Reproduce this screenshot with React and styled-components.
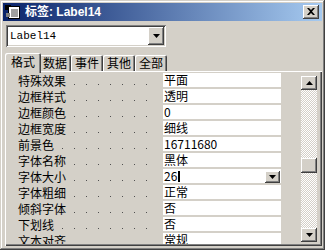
import React from "react";
import styled, { createGlobalStyle, css } from "styled-components";

const GlobalStyle = createGlobalStyle`
  html, body { margin: 0; padding: 0; background: #d4d0c8; }
  body { font-family: "Noto Sans CJK SC", sans-serif; }
  * { box-sizing: border-box; }
`;

const raised = css`
  background: #d4d0c8;
  box-shadow: inset -1px -1px #404040, inset 1px 1px #ffffff,
    inset -2px -2px #808080, inset 2px 2px #d4d0c8;
`;

const Window = styled.div`
  width: 325px;
  height: 250px;
  padding: 3px;
  background: #d4d0c8;
  box-shadow: inset -1px -1px #404040, inset 1px 1px #d4d0c8,
    inset -2px -2px #808080, inset 2px 2px #ffffff;
  display: flex;
  flex-direction: column;
  overflow: hidden;
`;

const TitleBar = styled.div`
  height: 18px;
  flex-shrink: 0;
  background: linear-gradient(to right, #0a246a, #a6caf0);
  display: flex;
  align-items: center;
  padding: 0 3px 0 2px;
`;

const TitleText = styled.span`
  margin-left: 4px;
  color: #ffffff;
  font-family: "Liberation Sans", "Noto Sans CJK SC", sans-serif;
  font-weight: bold;
  font-size: 12px;
  line-height: 16px;
  white-space: nowrap;
`;

const CloseButton = styled.div`
  ${raised};
  margin-left: auto;
  width: 16px;
  height: 14px;
  display: flex;
  align-items: center;
  justify-content: center;
  padding-bottom: 1px;
`;

const Combo = styled.div`
  margin: 4px 0 0 3px;
  width: 160px;
  height: 22px;
  flex-shrink: 0;
  background: #ffffff;
  box-shadow: inset 1px 1px #808080, inset -1px -1px #ffffff,
    inset 2px 2px #404040, inset -2px -2px #d4d0c8;
  display: flex;
  align-items: center;
  padding: 2px;
`;

const ComboText = styled.span`
  flex: 1;
  padding-left: 2px;
  font-family: "Liberation Mono", monospace;
  font-size: 11px;
  color: #000;
`;

const DropButton = styled.div`
  ${raised};
  width: ${(p) => p.$w}px;
  height: ${(p) => p.$h}px;
  display: flex;
  align-items: center;
  justify-content: center;
  flex-shrink: 0;
`;

const TabStrip = styled.div`
  display: flex;
  align-items: flex-end;
  height: 18px;
  flex-shrink: 0;
  margin: 6px 0 0 2px;
  padding-left: 2px;
`;

const Tab = styled.div`
  position: relative;
  width: ${(p) => (p.$active ? 36 : 32)}px;
  height: ${(p) => (p.$active ? 20 : 16)}px;
  margin: ${(p) => (p.$active ? "0 -2px -2px -2px" : "0")};
  z-index: ${(p) => (p.$active ? 1 : 0)};
  background: #d4d0c8;
  border-radius: 2px 2px 0 0;
  box-shadow: inset 1px 1px #ffffff, inset -1px 0 #404040,
    inset -2px 0 #808080;
  font-size: 12px;
  line-height: ${(p) => (p.$active ? 17 : 16)}px;
  text-align: center;
  color: #000;
`;

const Panel = styled.div`
  margin-left: 2px;
  width: 317px;
  height: 175px;
  flex-shrink: 0;
  padding: 2px;
  background: #d4d0c8;
  box-shadow: inset 1px 1px #ffffff, inset -1px -1px #404040,
    inset -2px -2px #808080;
  display: flex;
`;

const List = styled.div`
  width: 292px;
  overflow: hidden;
  display: flex;
  flex-direction: column;
`;

const Row = styled.div`
  display: grid;
  grid-template-columns: 156px 118px;
  height: 16px;
  flex-shrink: 0;
`;

const LabelCell = styled.div`
  padding: 0 14px 0 11px;
  background-image: linear-gradient(to right, #505050 1px, transparent 1px);
  background-size: 12px 1px;
  background-repeat: repeat-x;
  background-origin: content-box;
  background-clip: content-box;
  background-position: 8px 11px;
  font-size: 12px;
  line-height: 15px;
  white-space: nowrap;
  overflow: hidden;
`;

const LabelText = styled.span`
  background: #d4d0c8;
  padding-right: 2px;
  color: #000;
`;

const ValueCell = styled.div`
  height: 14px;
  background: #ffffff;
  display: flex;
  align-items: center;
  padding-left: 1px;
  font-size: 12px;
  line-height: 14px;
  color: #000;
  white-space: nowrap;
`;

const Caret = styled.span`
  width: 2px;
  height: 11px;
  background: #000;
  margin-left: 1px;
`;

const ValueDrop = styled.div`
  margin-left: auto;
  margin-right: 1px;
  align-self: flex-start;
  margin-top: 2px;
`;

const ScrollBar = styled.div`
  width: 16px;
  margin: 3px 3px 2px auto;
  display: flex;
  flex-direction: column;
  background: repeating-conic-gradient(#ffffff 0 25%, #d4d0c8 0 50%) 0 0 / 2px 2px;
`;

const ScrollButton = styled.div`
  ${raised};
  height: ${(p) => p.$h}px;
  flex-shrink: 0;
  display: flex;
  align-items: center;
  justify-content: center;
  margin-top: ${(p) => p.$top || "0"};
`;

const DownArrow = () => (
  <svg width="7" height="4" viewBox="0 0 7 4">
    <path d="M0 0h7L3.5 4z" fill="#000" />
  </svg>
);

const UpArrow = () => (
  <svg width="7" height="4" viewBox="0 0 7 4">
    <path d="M0 4h7L3.5 0z" fill="#000" />
  </svg>
);

const SheetIcon = () => (
  <svg width="16" height="16" viewBox="0 0 16 16">
    <rect x="3.5" y="2.5" width="11" height="12" fill="#fff" stroke="#000" />
    <path d="M6 6h7M6 8h7M6 10h7M6 12h7" stroke="#404040" strokeWidth="1" />
    <path d="M0 1h6v2H3v3H0z" fill="#000" />
    <rect x="1" y="9" width="4" height="4" fill="#808080" />
  </svg>
);

const CloseX = () => (
  <svg width="8" height="7" viewBox="0 0 8 7">
    <path d="M0 0h2l2 2 2-2h2L5 3.5 8 7H6L4 5 2 7H0l3-3.5z" fill="#000" />
  </svg>
);

const rows = [
  ["特殊效果", "平面"],
  ["边框样式", "透明"],
  ["边框颜色", "0"],
  ["边框宽度", "细线"],
  ["前景色", "16711680"],
  ["字体名称", "黑体"],
  ["字体大小", "26", true],
  ["字体粗细", "正常"],
  ["倾斜字体", "否"],
  ["下划线", "否"],
  ["文本对齐", "常规"],
];

const tabs = ["格式", "数据", "事件", "其他", "全部"];

export default function App() {
  return (
    <>
      <GlobalStyle />
      <Window>
        <TitleBar>
          <SheetIcon />
          <TitleText>标签: Label14</TitleText>
          <CloseButton>
            <CloseX />
          </CloseButton>
        </TitleBar>
        <Combo>
          <ComboText>Label14</ComboText>
          <DropButton $w={16} $h={18}>
            <DownArrow />
          </DropButton>
        </Combo>
        <TabStrip>
          {tabs.map((t, i) => (
            <Tab key={t} $active={i === 0}>
              {t}
            </Tab>
          ))}
        </TabStrip>
        <Panel>
          <List>
            {rows.map(([label, value, editing]) => (
              <Row key={label}>
                <LabelCell>
                  <LabelText>{label}</LabelText>
                </LabelCell>
                <ValueCell>
                  {value}
                  {editing && <Caret />}
                  {editing && (
                    <ValueDrop>
                      <DropButton $w={15} $h={12}>
                        <DownArrow />
                      </DropButton>
                    </ValueDrop>
                  )}
                </ValueCell>
              </Row>
            ))}
          </List>
          <ScrollBar>
            <ScrollButton $h={14}>
              <UpArrow />
            </ScrollButton>
            <ScrollButton $h={15} $top="68px" />
            <ScrollButton $h={14} $top="auto">
              <DownArrow />
            </ScrollButton>
          </ScrollBar>
        </Panel>
      </Window>
    </>
  );
}
